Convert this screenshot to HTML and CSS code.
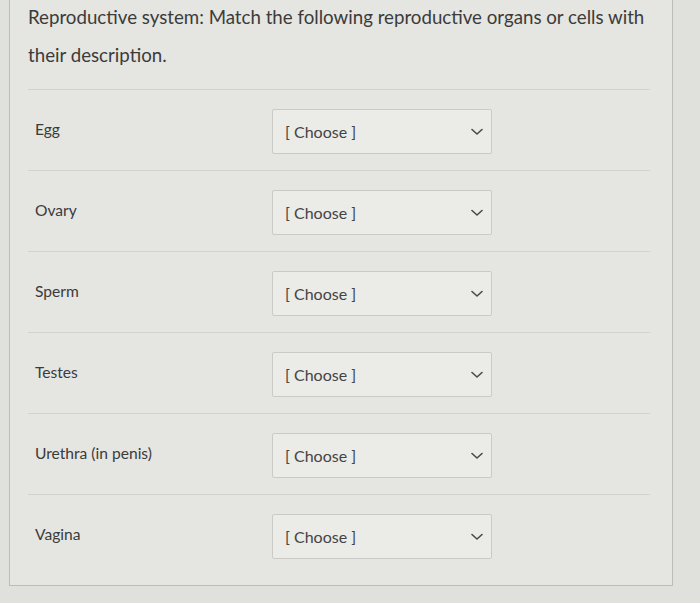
FILE: index.html
```html
<!DOCTYPE html>
<html lang="en">
<head>
<meta charset="utf-8">
<title>Reproductive system matching</title>
<link rel="stylesheet" href="styles.css">
</head>
<body>
<div class="card">
  <div class="question">Reproductive system: Match the following reproductive organs or cells with their description.</div>
  <div class="rows">
    <div class="row">
      <div class="label">Egg</div>
      <div class="select"><span>[ Choose ]</span><svg class="chev" viewBox="0 0 12 8" width="12" height="8"><path d="M1 1.5 L6 6 L11 1.5"/></svg></div>
    </div>
    <div class="row">
      <div class="label">Ovary</div>
      <div class="select"><span>[ Choose ]</span><svg class="chev" viewBox="0 0 12 8" width="12" height="8"><path d="M1 1.5 L6 6 L11 1.5"/></svg></div>
    </div>
    <div class="row">
      <div class="label">Sperm</div>
      <div class="select"><span>[ Choose ]</span><svg class="chev" viewBox="0 0 12 8" width="12" height="8"><path d="M1 1.5 L6 6 L11 1.5"/></svg></div>
    </div>
    <div class="row">
      <div class="label">Testes</div>
      <div class="select"><span>[ Choose ]</span><svg class="chev" viewBox="0 0 12 8" width="12" height="8"><path d="M1 1.5 L6 6 L11 1.5"/></svg></div>
    </div>
    <div class="row">
      <div class="label">Urethra (in penis)</div>
      <div class="select"><span>[ Choose ]</span><svg class="chev" viewBox="0 0 12 8" width="12" height="8"><path d="M1 1.5 L6 6 L11 1.5"/></svg></div>
    </div>
    <div class="row">
      <div class="label">Vagina</div>
      <div class="select"><span>[ Choose ]</span><svg class="chev" viewBox="0 0 12 8" width="12" height="8"><path d="M1 1.5 L6 6 L11 1.5"/></svg></div>
    </div>
  </div>
</div>
</body>
</html>
```

FILE: styles.css
```css
html, body {
  margin: 0;
  padding: 0;
  background: #e0e0dc;
  font-family: Lato, "Liberation Sans", sans-serif;
  color: #3b3b3b;
}
.card {
  margin-left: 9px;
  width: 664px;
  height: 588px;
  box-sizing: border-box;
  background: #e5e5e1;
  border: 1px solid #bcbcb8;
  border-top: none;
  padding: 0 22px 0 18px;
}
.question {
  font-size: 18.7px;
  line-height: 38px;
  padding-top: 0;
  padding-bottom: 15px;
  margin-top: -2px;
  border-bottom: 1px solid #d2d2ce;
}
.row {
  display: flex;
  align-items: flex-start;
  padding: 19px 0 16px 7px;
  border-bottom: 1px solid #d2d2ce;
}
.row:last-child {
  border-bottom: none;
}
.label {
  width: 237px;
  font-size: 15.6px;
  line-height: 20px;
  padding-top: 10px;
}
.select {
  width: 220px;
  height: 45px;
  box-sizing: border-box;
  display: flex;
  align-items: center;
  justify-content: space-between;
  padding: 0 8px 0 12px;
  background: #ebebe8;
  border: 1px solid #cacac6;
  border-radius: 2px;
  font-size: 16px;
  color: #444444;
}
.chev {
  fill: none;
  stroke: #4a4a4a;
  stroke-width: 1.6;
  stroke-linecap: round;
  stroke-linejoin: round;
}
```
